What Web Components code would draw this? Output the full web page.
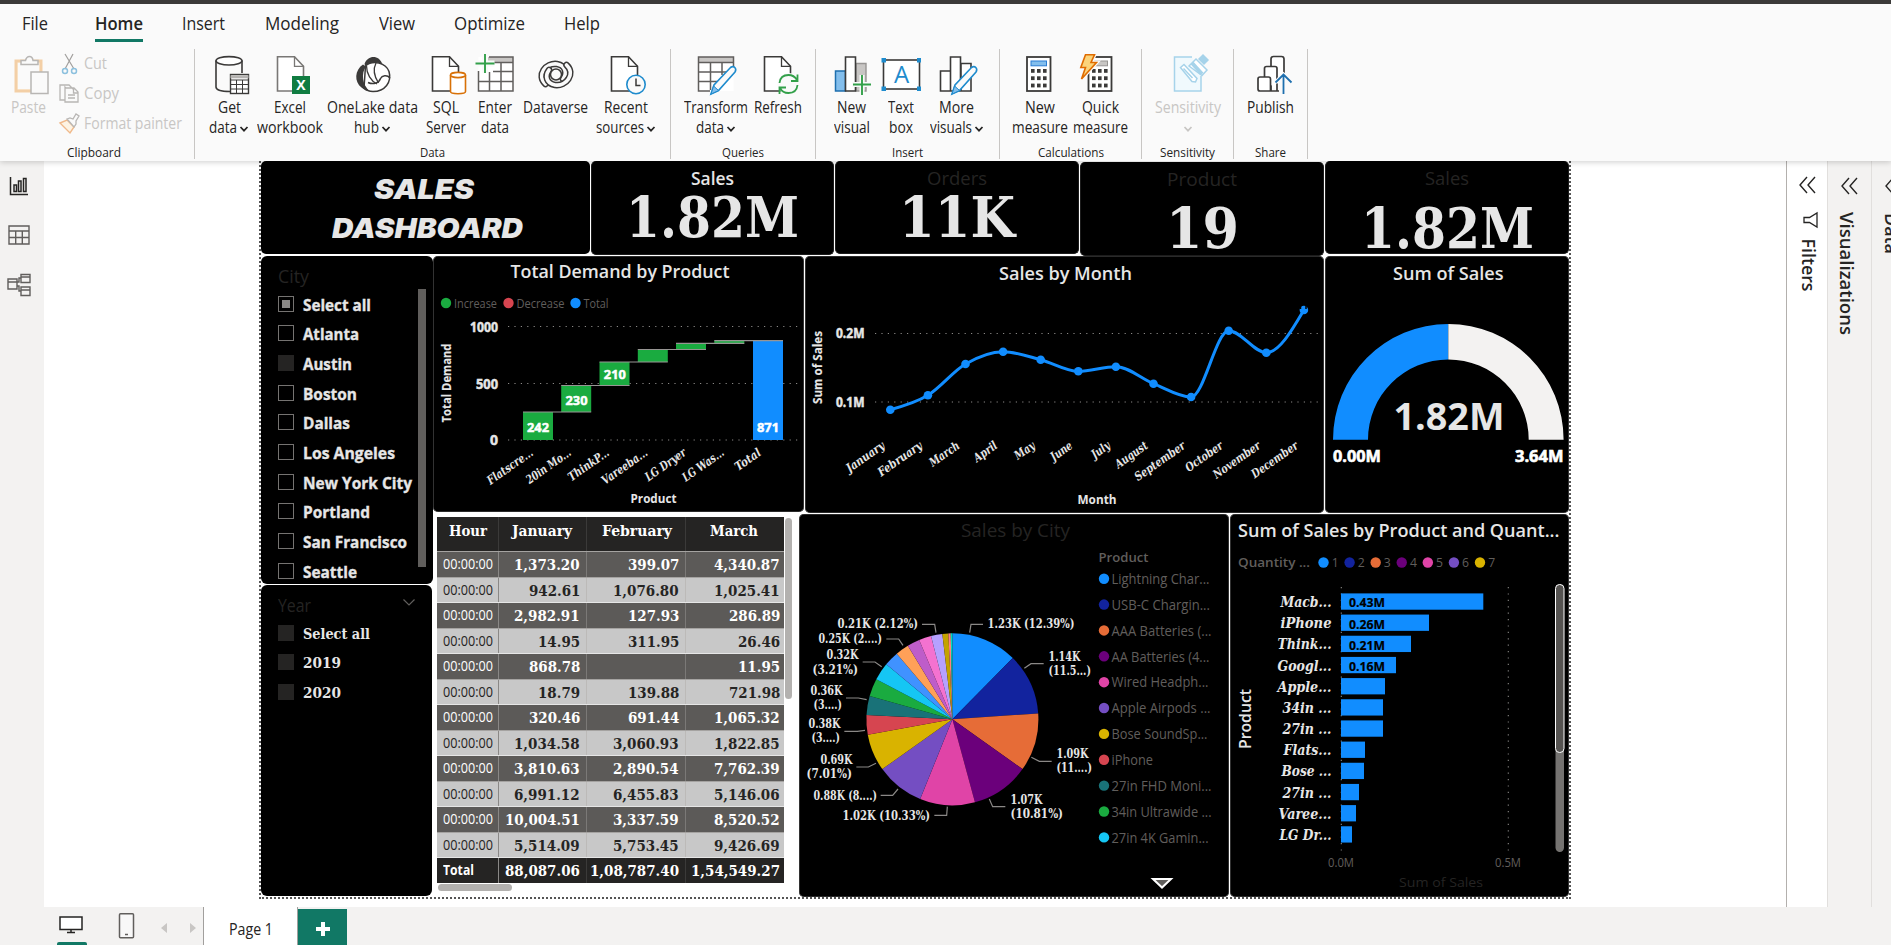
<!DOCTYPE html>
<html lang="en">
<head>
<meta charset="utf-8">
<title>Sales Dashboard</title>
<style>
html,body{margin:0;padding:0}
body{width:1891px;height:945px;overflow:hidden;background:#fff;font-family:"Open Sans","Noto Sans",sans-serif;color:#252423}
</style>
</head>
<body>
<bi-app></bi-app>
<script>
const SANS='"Open Sans","Noto Sans",sans-serif';
const SERIF='"DejaVu Serif","Liberation Serif",serif';

function define(name,css,html){
  customElements.define(name,class extends HTMLElement{
    connectedCallback(){
      if(this.shadowRoot)return;
      this.attachShadow({mode:'open'}).innerHTML='<style>'+css+'</style>'+(typeof html==='function'?html(this):html);
    }
  });
}
// SVG text with an optional exact width
function T(x,y,s,size,o={}){
  const st=`font-family:${(o.serif?SERIF:SANS).replace(/"/g,"'")};font-size:${size}px;font-weight:${o.b||400};${o.i?'font-style:italic;':''}${o.st?`stroke:${o.fill||'#e6e6e6'};stroke-width:${o.st};`:''}`;
  return `<text x="${x}" y="${y}" fill="${o.fill||'#e6e6e6'}" style="${st}" ${o.a?`text-anchor="${o.a}"`:''} ${o.w?`textLength="${o.w}" lengthAdjust="spacingAndGlyphs"`:''} ${o.r?`transform="rotate(${o.r} ${x} ${y})"`:''}>${s}</text>`;
}

// Text squeezed or stretched to a given width
customElements.define('fit-text',class extends HTMLElement{
  connectedCallback(){
    if(this.shadowRoot)return;
    const w=+this.getAttribute('w');
    this.attachShadow({mode:'open'}).innerHTML=`<style>:host{display:inline-block;white-space:nowrap;width:${w}px}span{display:inline-block;transform-origin:0 50%}</style><span><slot></slot></span>`;
    const s=this.shadowRoot.querySelector('span');
    const n=s.getBoundingClientRect().width;
    if(n)s.style.transform=`scaleX(${w/n})`;
  }
});

/* ---------- ribbon ---------- */
const K='#3b3a39';
const doc=(x,c=K)=>`<path d="M${x} 2.8h17l9 9.5V37H${x}z" fill="#fff" stroke="${c}" stroke-width="1.6"/><path d="M${x+17} 2.8v9.6h9" fill="none" stroke="${c}" stroke-width="1.3"/>`;
const pencil=`<path d="M15 40l3-9L34.5 13.5q2.5-1.8 4.3 0t.2 4.5L22.5 36.5z" fill="#fafafa" stroke="#1e8bcd" stroke-width="1.6"/><path d="M15 40l2.6-8 5 4.6z" fill="#83beec" stroke="#1e8bcd"/>`;
const keys=x=>{let r='';for(let j=0;j<3;j++)for(let i=0;i<3;i++)r+=`<rect x="${x+i*6}" y="${15+j*7.3}" width="3.6" height="3.8" fill="${K}"/>`;return r};
const bandA='M9.5 30C0 21 10 8.500 21 10C29.500 11.500 31.500 19 27 25',bandB='M30.500 11C40 20 30 32.500 19 31C10.500 29.500 8.500 22 13 16';
const band=d=>`<path d="${d}" stroke="${K}" stroke-width="6.600"/><path d="${d}" stroke="#fafafa" stroke-width="3.700"/>`;
const ICONS={
 get:`<path d="M7 6.5V33c0 3 6 4.5 14 4.5M33 6.5V19" fill="none" stroke="${K}" stroke-width="1.6"/><ellipse cx="20" cy="6.8" rx="13" ry="4.2" fill="#fff" stroke="${K}" stroke-width="1.6"/><rect x="21.5" y="20.5" width="18" height="19" fill="#fff" stroke="${K}" stroke-width="1.4"/><path d="M21.5 22.8h18" stroke="#b5b3b1" stroke-width="3"/><path d="M21.5 26h18M21.5 30.5h18M21.5 35h18M27.5 26v13M33.5 26v13" stroke="${K}"/>`,
 excel:doc(7.5,'#797775')+`<rect x="22" y="22" width="18" height="18" fill="#107c41"/><text x="31" y="36.2" text-anchor="middle" fill="#fff" style="font:bold 14px 'Open Sans'">X</text>`,
 lake:`<path d="M12.500 12C20 5.500 33 9 36 17.500 39 28 32 37.500 20 37.500 16 37.500 13 36 11 34z" fill="#fff" stroke="${K}" stroke-width="1.500"/><path d="M10 10.500C1.500 16 1 28 8.500 33.500 11 35.800 14 37 17 37.300 9 31 8 19 13 12.500z" fill="${K}"/><path d="M11.500 10C15 .5 26.500 1 29.500 10.500 24 7.500 17 8 12.500 12z" fill="${K}"/><path d="M13.500 12C13.500 20 18 27 24 30M23 9c-3 6-2 13 2.500 20" fill="none" stroke="${K}" stroke-width="1.300"/><path d="M37 24c-3-3.500-8-2.500-9.500.5C26 29 20.500 31 15 28.500" fill="none" stroke="${K}" stroke-width="1.500"/>`,
 sql:doc(6.5)+`<path d="M24.500 21v16.500c0 3 15 3 15 0V21" fill="#fff" stroke="#d87107" stroke-width="1.6"/><ellipse cx="32" cy="21" rx="7.500" ry="2.600" fill="#fff" stroke="#d87107" stroke-width="1.6"/>`,
 enter:`<rect x="3.500" y="3" width="34.500" height="34" fill="#fff"/><path d="M13 3h25v5H13z" fill="#c8c6c4"/><path d="M3.500 17v20H38V3H14M3.500 27.500H38M18 17.500h20M15 8.500h23M14.500 18v19M26 9v28" fill="none" stroke="#605e5c" stroke-width="1.5"/><path d="M10 0v19M.5 9.500h19" stroke="#fafafa" stroke-width="6"/><path d="M10 0v19M.5 9.500h19" stroke="#33a04a" stroke-width="1.9"/>`,
 verse:`<g fill="none" stroke-linecap="round">${band(bandA)}${band(bandB)}<circle cx="20" cy="20.500" r="5.500" fill="#fafafa" stroke="${K}" stroke-width="1.500"/></g>`,
 recent:doc(5.500)+`<circle cx="30" cy="30.500" r="9.200" fill="#fafafa" stroke="#1e8bcd" stroke-width="1.600"/><path d="M30 24.500v7h4.500" fill="none" stroke="${K}" stroke-width="1.5"/>`,
 transform:`<rect x="2.500" y="3" width="35" height="34" fill="#fff"/><path d="M2.500 3h35v5.500h-35z" fill="#c8c6c4"/><path d="M37.500 14V3h-35v34H14M2.500 8.500h35M2.500 18H30M2.500 27.500H21M14.500 9v27M26 9v12" fill="none" stroke="#605e5c" stroke-width="1.500"/>`+pencil,
 refresh:doc(6.500)+`<circle cx="30.500" cy="30" r="11" fill="#fafafa"/><path d="M21.500 29c.5-5 4-8 9-8 4 0 7 2.500 8.500 5M39.500 20.500V27H33M39.500 31c-.5 5-4 8-9 8-4 0-7-2-8.500-5M21.500 40v-6.500H28" fill="none" stroke="#33a04a" stroke-width="1.800"/>`,
 visual:`<path d="M24 9.500h10V37H24z" fill="#c8c6c4" stroke="#979593" stroke-width="1.400"/><path d="M3.500 17h10v20h-10z" fill="#83beec" stroke="#1e6fae" stroke-width="1.500"/><path d="M13.500 3h10v34h-10z" fill="#fff" stroke="${K}" stroke-width="1.600"/><path d="M30 21v20M20 30.500h19" stroke="#fafafa" stroke-width="5"/><path d="M30 21v20M21 30.500h18" stroke="#33a04a" stroke-width="1.900"/>`,
 text:`<rect x="2.500" y="6" width="36" height="29" fill="#fff" stroke="${K}" stroke-width="1.600"/><path d="M.5 4h4.500v4.500H.5zM36 4h4v4.500h-4zM.5 32.500h4.500V37H.5zM36 32.500h4V37h-4z" fill="#1e8bcd"/><text x="20.500" y="29" text-anchor="middle" fill="#1e8bcd" style="font:24px 'Open Sans'">A</text>`,
 more:`<path d="M3.500 17h10v20h-10zM24 9.500h10V37H24zM13.500 3h10v34h-10z" fill="#fff" stroke="${K}" stroke-width="1.600"/>`+pencil,
 measure:`<rect x="7" y="3" width="23.500" height="34" fill="#fff" stroke="${K}" stroke-width="1.800"/><rect x="11" y="7" width="15.500" height="4.800" fill="#83beec" stroke="#2b7cd3"/>`+keys(11),
 quick:`<rect x="8.500" y="3" width="23" height="34" fill="#fff" stroke="${K}" stroke-width="1.800"/><rect x="14" y="7" width="13.500" height="4.800" fill="#c8c6c4" stroke="#979593"/>`+keys(12)+`<path d="M5.500.8h9L11 8.500h5.500L1.500 25l4-11.500H.8z" fill="#fbd47b" stroke="#fafafa" stroke-width="4"/><path d="M5.500.8h9L11 8.500h5.500L1.500 25l4-11.500H.8z" fill="#fbd47b" stroke="#e06c00" stroke-width="1.600"/>`,
 sens:`<g fill="none" stroke="#a6d3ea" stroke-width="1.500"><path d="M33 22v15H6.500V3H24" fill="#f0f9fd"/><path d="M12.500 13.500l3.500-3 13 14-1.500 3.500-3.500-.5z" fill="#fff"/><path d="M15.500 14.500l9 9.500"/><path d="M21 12l7-7 11 11-5 5.500z" fill="#fff"/><path d="M24 9l10 11" stroke-width="4"/><path d="M31 5l4-4 5 5-4 4z" fill="#a6d3ea"/></g>`,
 publish:`<g fill="#fff" stroke="${K}" stroke-width="1.700"><path d="M20 37V5q0-2.500 2.500-2.500h8Q33 2.500 33 5v14"/><path d="M13.500 24V14.500q0-2 2-2H24q2 0 2 2V37"/><path d="M7 35V25q0-2 2-2h8.500q2 0 2 2v12H9q-2 0-2-2zM19.500 37H28"/></g><path d="M32.500 20v20M24.500 28.500l8-8 8 8" fill="none" stroke="#fafafa" stroke-width="4"/><path d="M32.500 20.500V40M24.500 28.500l8-8 8 8" fill="none" stroke="#1e6fae" stroke-width="1.800"/>`
};
const chev=`<svg width="10" height="8" viewBox="0 0 10 8"><path d="M1.500 2l3.500 3.700L8.500 2" fill="none" stroke="currentColor" stroke-width="1.700"/></svg>`;
define('ribbon-button',`:host{display:flex;flex-direction:column;align-items:center;padding-top:5px;box-sizing:border-box;font-size:15.5px;line-height:20px}
:host([disabled]){color:#c8c6c4}
.i{display:block;margin-bottom:1px;overflow:visible}.l{height:20px;display:flex;align-items:center;gap:2px}.l svg{margin-top:3px}`,
 el=>{
  el.style.width=el.getAttribute('width')+'px';
  const line=(s)=>{if(!s)return'';const[t,w,c]=s.split('|');return `<div class="l">${t?`<fit-text w="${w}">${t}</fit-text>`:''}${c?chev:''}</div>`};
  return `<svg class="i" width="40" height="42" viewBox="0 0 40 42">${ICONS[el.getAttribute('icon')]}</svg>${line(el.getAttribute('l1'))}${line(el.getAttribute('l2'))}`;
 });
define('ribbon-group',`:host{display:flex;flex-direction:column;box-sizing:border-box;height:110px;border-right:1px solid #c8c6c4}
.b{display:flex;justify-content:center;height:95px;padding-right:var(--shift,0)}.n{font-size:13px;line-height:16px;text-align:center;height:15px;padding-right:var(--lshift,0)}`,
 el=>{el.style.width=el.getAttribute('width')+'px';return `<div class="b"><slot></slot></div><div class="n"><fit-text w="${el.getAttribute('lw')}">${el.getAttribute('label')}</fit-text></div>`});
define('clipboard-tools',`:host{display:flex;width:194px;color:#c8c6c4;font-size:15.5px}
.p{display:flex;flex-direction:column;align-items:flex-start;padding:5px 0 0 11px;width:46px;box-sizing:content-box;line-height:20px}
.p svg{margin:0 0 1px 2px}.s{display:flex;flex-direction:column;margin-top:-1px}.r{display:flex;height:30px;align-items:center;gap:3px}`,
 `<div class="p"><svg width="36" height="42" viewBox="0 0 36 42"><rect x="3" y="7" width="25" height="30" fill="#fdf3e3" stroke="#f3cfa6" stroke-width="3"/><path d="M5 9h21v26H5z" fill="#fafafa"/><path d="M8 10.500V6.500h4.500q1-4 4-4t3.500 4H25v4z" fill="#fafafa" stroke="#b8b6b4" stroke-width="1.500"/><rect x="18" y="18" width="17" height="21.500" fill="#fafafa" stroke="#b8b6b4" stroke-width="1.500"/></svg><fit-text w="35">Paste</fit-text></div>
 <div class="s">
 <div class="r"><svg width="24" height="24" viewBox="0 0 24 24"><path d="M8 3l9 15M16 3L8 18" stroke="#a19f9d" stroke-width="1.200"/><circle cx="8" cy="20" r="2.500" fill="none" stroke="#8cc0de" stroke-width="1.500"/><circle cx="17" cy="20" r="2.500" fill="none" stroke="#8cc0de" stroke-width="1.500"/></svg><fit-text w="23">Cut</fit-text></div>
 <div class="r"><svg width="24" height="24" viewBox="0 0 24 24"><path d="M8 19H3V4h9l4 4M8 6v15h13V11l-4-4H9z M16.500 7v5H21M11 14h7M11 17h7" fill="none" stroke="#b8b6b4" stroke-width="1.300"/></svg><fit-text w="35">Copy</fit-text></div>
 <div class="r"><svg width="24" height="24" viewBox="0 0 24 24"><path d="M3 12l7-3 7 7-4 6z" fill="#fdf3e3" stroke="#f0b98a" stroke-width="1.400"/><path d="M10 8l3-1 3 1 3-5 3 2-3 5v3l-2 3z" fill="#fafafa" stroke="#b8b6b4" stroke-width="1.300"/></svg><fit-text w="98">Format painter</fit-text></div>
 </div>`);
define('ribbon-tab',`:host{display:block;height:38px;box-sizing:border-box;font-size:17.5px;line-height:38px;border-bottom:3px solid transparent;color:#252423}
:host([active]){font-weight:600;border-bottom-color:#117865}fit-text{display:block}`,
 el=>`<fit-text w="${el.getAttribute('w')}">${el.getAttribute('label')}</fit-text>`);
define('app-ribbon',`:host{display:block;height:161px;box-sizing:border-box;border-top:4px solid #3b3a39;background:#fafafa;box-shadow:0 1px 6px #0003;position:relative;z-index:2}
nav{display:flex;height:45px}.g{display:flex}`,
 ()=>{
  const tabs=[['File',22,48],['Home',95,143],['Insert',182,225],['Modeling',265,339],['View',379,415],['Optimize',454,525],['Help',564,600]];
  let x=0,n='';
  for(const[t,a,b]of tabs){n+=`<ribbon-tab label="${t}" w="${b-a}" style="margin:0 0 0 ${a-x}px" ${t==='Home'?'active':''}></ribbon-tab>`;x=b}
  const B=(icon,width,l1,l2='',d='')=>`<ribbon-button icon="${icon}" width="${width}" l1="${l1}" l2="${l2}" ${d}></ribbon-button>`;
  return `<nav>${n}</nav><div class="g">
  <ribbon-group width="195" label="Clipboard" lw="54" style="--lshift:7px"><clipboard-tools></clipboard-tools></ribbon-group>
  <ribbon-group width="476" label="Data" lw="25" style="--shift:2px">${B('get',51,'Get|23','data|28|1')}${B('excel',70,'Excel|32','workbook|66')}${B('lake',96,'OneLake data|91','hub|25|1')}${B('sql',50,'SQL|26','Server|40')}${B('enter',49,'Enter|34','data|28')}${B('verse',72,'Dataverse|65')}${B('recent',68,'Recent|44','sources|48|1')}</ribbon-group>
  <ribbon-group width="145" label="Queries" lw="42">${B('transform',70,'Transform|64','data|28|1')}${B('refresh',54,'Refresh|48')}</ribbon-group>
  <ribbon-group width="184" label="Insert" lw="31">${B('visual',48,'New|29','visual|36')}${B('text',50,'Text|26','box|24')}${B('more',62,'More|35','visuals|42|1')}</ribbon-group>
  <ribbon-group width="142" label="Calculations" lw="66" style="--shift:2px">${B('measure',61,'New|30','measure|56')}${B('quick',59,'Quick|37','measure|55')}</ribbon-group>
  <ribbon-group width="92" label="Sensitivity" lw="55">${B('sens',72,'Sensitivity|66','||1','disabled')}</ribbon-group>
  <ribbon-group width="74" label="Share" lw="31">${B('publish',52,'Publish|47')}</ribbon-group></div>`;
 });

/* ---------- visuals ---------- */
define('kpi-card',`:host{display:flex;flex-direction:column;align-items:center;box-sizing:border-box;background:#000;color:#e6e6e6;border:1px solid #1c1c1c;border-top:0;border-radius:5px}
.n{font-size:17.5px;line-height:24px;font-weight:var(--w,400);color:var(--c,#252423);margin-top:5px}
.v{font:bold 56px/60px ${SERIF};margin-top:var(--m,-3px)}`,
 el=>`<fit-text class="n" w="${el.getAttribute('nw')}">${el.getAttribute('name')}</fit-text><fit-text class="v" w="${el.getAttribute('vw')}">${el.getAttribute('value')}</fit-text>`);
define('title-card',`:host{display:flex;flex-direction:column;align-items:center;box-sizing:border-box;background:#000;color:#e6e6e6;border-radius:5px;font:italic 900 27.5px/39px Inter,"Liberation Sans",sans-serif;padding-top:8.500px}
.a{margin-right:3px}.b{margin-left:5px}`,
 `<fit-text class="a" w="100">SALES</fit-text><fit-text class="b" w="191">DASHBOARD</fit-text>`);

define('slicer-item',`:host{display:flex;align-items:center;gap:9px;height:29.65px;font-size:16.800px;font-weight:700;color:#e6e6e6}
fit-text{-webkit-text-stroke:.35px #e6e6e6;margin-top:1px}
:host([serif]) fit-text{-webkit-text-stroke:0}
.c{width:16px;height:16px;box-sizing:border-box;border:1px solid #757371;display:grid;place-items:center}
:host([filled]) .c{background:#252423;border-color:#252423}
:host([partial]) .c::after{content:"";width:8px;height:8px;background:#8a8886}
:host([serif]){font:bold 14.5px ${SERIF}}`,
 el=>`<div class="c"></div><fit-text w="${el.getAttribute('w')}">${el.getAttribute('label')}</fit-text>`);
define('slicer-card',`:host{display:block;box-sizing:border-box;background:#000;border-radius:6px;overflow:hidden}
header{display:flex;justify-content:space-between;font-size:18.500px;color:#252423;line-height:24px;height:33px;padding:8px 16px 0 17px;box-sizing:border-box}
.b{display:flex;justify-content:space-between;padding:0 7px 0 16.500px}.s{width:8px;height:278px;background:#605e5c;flex:none}`,
 el=>`<header><fit-text w="${el.getAttribute('w')}">${el.getAttribute('label')}</fit-text>${el.hasAttribute('chevron')?'<svg width="14" height="9" viewBox="0 0 14 9" style="margin-top:5px"><path d="M1.500 1.500L7 7l5.500-5.500" fill="none" stroke="#605e5c" stroke-width="1.200"/></svg>':''}</header><div class="b"><div><slot></slot></div>${el.hasAttribute('scroll')?'<div class="s"></div>':''}</div>`);

const chartCss=`:host{display:block;box-sizing:border-box;background:#000;border-radius:5px;overflow:hidden;box-shadow:0 0 0 .6px #555 inset}svg{display:block}`;
const chart=(name,box,draw)=>define(name,chartCss,()=>`<svg width="${box[2]}" height="${box[3]}" viewBox="${box.join(' ')}">${draw()}</svg>`);
const dots=(x1,y1,x2,y2)=>`<line x1="${x1}" y1="${y1}" x2="${x2}" y2="${y2}" stroke="#8a8886" stroke-width="1.100" stroke-dasharray="1.200 5.200"/>`;

chart('waterfall-chart',[433,256,371,256],()=>{
  let s=T(510.5,277.7,'Total Demand by Product',18,{b:600,w:219});
  for(const[c,x,t,w]of[['#1aab40',446,'Increase',43],['#d64550',508.5,'Decrease',48],['#118dff',575.5,'Total',25]])
    s+=`<circle cx="${x}" cy="303" r="5.200" fill="${c}"/>`+T(x+8,307.7,t,13,{fill:'#605e5c',w});
  for(const[t,x,y,w]of[['1000',470,326.5,28],['500',476,383.5,22],['0',490,440,8]])
    s+=dots(508,y,800,y)+T(x,y+5,t,13.5,{b:700,w,st:.5});
  s+=T(450.5,422.5,'Total Demand',12.500,{b:700,w:79,r:-90,st:.1});
  const bars=[[523,412,440],[561.2,385.5,412],[599.5,362,385.5],[637.8,349.5,362],[676,343.3,349.5],[714.3,340.6,343.5],[753,340.6,440]];
  bars.forEach(([x,a,b],i)=>s+=`<rect x="${x}" y="${a}" width="30" height="${b-a}" fill="${i===6?'#118dff':'#1aab40'}"/>`);
  bars.slice(0,6).forEach(([x,a],i)=>s+=`<line x1="${x}" x2="${bars[i+1][0]+30}" y1="${a}" y2="${a}" stroke="#979593" stroke-width="1.200"/>`);
  for(const[t,x,y]of[['242',527,431.5],['230',565.5,404.5],['210',603.8,378.5],['871',757,431.5]])s+=T(x,y,t,12.8,{b:700,w:22,fill:'#fff',st:.5});
  [['Flatscre...',534,53],['20in Mo...',572,52],['ThinkP...',610,47],['Vareeba...',648.5,53],['LG Dryer',687,47],['LG Was...',725,48],['Total',762,29]]
   .forEach(([t,x,w])=>s+=T(x,454.5,t,12,{b:700,i:1,serif:1,a:'end',w,r:-35}));
  return s+T(630.5,503,'Product',12.5,{b:700,w:46});
});

chart('line-chart',[805,256,519,257],()=>{
  let s=T(999,280,'Sales by Month',18,{b:600,w:133});
  s+=dots(875,333.5,1319,333.5)+dots(875,402,1319,402);
  s+=T(836,338,'0.2M',13.4,{b:700,w:28.5,st:.5})+T(836,406.5,'0.1M',13.4,{b:700,w:28.5,st:.5});
  s+=T(822,404,'Sum of Sales',12,{b:700,w:73,r:-90,st:.1});
  const ys=[409.7,395.3,364,351.7,359.7,371.3,366.7,383.7,397,330.7,352.7,310],h=37.6,xs=ys.map((_,i)=>890.3+i*h);
  const d=ys.slice(1).map((y,i)=>(y-ys[i])/h),n=ys.length,m=[];
  for(let i=1;i<n-1;i++){const p=(d[i-1]+d[i])/2;m[i]=d[i-1]*d[i]<=0?0:Math.sign(d[i])*2*Math.min(Math.abs(d[i-1]),Math.abs(d[i]),.5*Math.abs(p))}
  m[0]=(3*d[0]-m[1])/2;m[n-1]=(3*d[n-2]-m[n-2])/2;
  let p=`M${xs[0]} ${ys[0]}`;
  for(let i=1;i<n;i++)p+=`C${xs[i-1]+h/3} ${ys[i-1]+m[i-1]*h/3} ${xs[i]-h/3} ${ys[i]-m[i]*h/3} ${xs[i]} ${ys[i]}`;
  s+=`<path d="${p}" fill="none" stroke="#118dff" stroke-width="3"/>`;
  xs.forEach((x,i)=>s+=`<circle cx="${x}" cy="${ys[i]}" r="4.300" fill="#118dff"/>`);
  s+='<path d="M1300.500 305v4M1306 305v4" stroke="#000" stroke-width="1.500"/>';
  [['January',44],['February',51],['March',34],['April',26],['May',22],['June',24],['July',20],['August',37],['September',59],['October',43],['November',55],['December',54]]
   .forEach(([t,w],i)=>s+=T(885.5+i*h,447.5,t,12,{b:700,i:1,serif:1,a:'end',w,r:-35}));
  return s+T(1077.5,504,'Month',12.5,{b:700,w:39});
});

chart('gauge-chart',[1325,256,244,257],()=>
  T(1393,279.7,'Sum of Sales',17.5,{b:600,w:110.5})
  +`<path d="M1333 439.700A115.500 115.500 0 0 1 1448.300 324V359.500A80.200 80.200 0 0 0 1368 439.700z" fill="#118dff"/><path d="M1448.300 324A115.500 115.500 0 0 1 1563.600 439.700H1528.700A80.200 80.200 0 0 0 1448.300 359.500z" fill="#f3f2f1"/>`
  +T(1393.5,429.7,'1.82M',38,{b:700,w:111})+T(1333,461.5,'0.00M',15.5,{b:700,w:48,fill:'#fff',st:.6})+T(1515,461.5,'3.64M',15.5,{b:700,w:48.5,fill:'#fff',st:.6})
);

const COL=['#118dff','#12239e','#e66c37','#6b007b','#e044a7','#744ec2','#d9b300','#d64550','#197278','#1aab40','#15c6f4','#4092ff','#ffa058','#be5dc9','#f472d0','#b5a1ff','#c4a200','#ff8080','#00dbbc'];
chart('pie-chart',[799,514,430,383],()=>{
  let s=T(961,536.7,'Sales by City',18,{fill:'#252423',w:109});
  const A=[0,44.6,86.1,125.4,164.8,202,234.6,259.7,272.9,285.8,297.8,309.7,319.7,328.8,337.3,345.6,353.3,357.3,358.9,360],cx=952.4,cy=719.3,r=86;
  const P=a=>`${cx+r*Math.sin(a*Math.PI/180)} ${cy-r*Math.cos(a*Math.PI/180)}`;
  COL.forEach((c,i)=>s+=`<path d="M${cx} ${cy}L${P(A[i])}A${r} ${r} 0 0 1 ${P(A[i+1])}z" fill="${c}"/>`);
  for(const l of[[524,368,528,343,564,343],[688,475,708,461,746,461],[709,742,733,754,770,754],[583,867,593,890,631,890],[457,890,455,916,418,916],[309,837,293,856,257,856],[243,760,220,771,184,771],[210,661,187,664,148,664],[215,569,190,564,153,564],[260,470,240,456,203,456],[324,406,311,387,274,387],[423,368,419,343,381,343]]){
    const q=l.map((v,i)=>(i%2?510:795)+v/3);s+=`<path d="M${q[0]} ${q[1]}L${q[2]} ${q[3]}L${q[4]} ${q[5]}" fill="none" stroke="#8a8886" stroke-width="1.200"/>`}
  for(const[t,x,x2,y]of[['1.23K (12.39%)',987.5,1074.5,628.3],['1.14K',1048.5,1080.5,661.3],['(11.5...)',1048.5,1091,675.3],['1.09K',1056.5,1088.5,758.3],['(11....)',1056.5,1092,772.3],['1.07K',1010.5,1042.5,804.3],['(10.81%)',1010.5,1063,817.5],['1.02K (10.33%)',842.5,930,819.5],['0.88K (8....)',813.5,877,799.5],['0.69K',820.5,852.5,764.3],['(7.01%)',806.5,852,778.3],['0.38K',808.5,840.5,728.3],['(3....)',811.5,840,742.3],['0.36K',810.5,842.5,695.3],['(3....)',813.5,842,709.3],['0.32K',826.5,858.5,659.3],['(3.21%)',812.5,858,673.5],['0.25K (2....)',818.5,882,643],['0.21K (2.12%)',837.5,918,628.3]])
    s+=T(x,y,t,12,{serif:1,b:700,w:x2-x});
  s+=T(1098.5,562.3,'Product',13.300,{b:600,fill:'#605e5c',w:50});
  [['Lightning Char...',98],['USB-C Chargin...',98.5],['AAA Batteries (...',100],['AA Batteries (4...',98],['Wired Headph...',97],['Apple Airpods ...',99],['Bose SoundSp...',96],['iPhone',41.5],['27in FHD Moni...',100],['34in Ultrawide ...',100],['27in 4K Gamin...',97]]
   .forEach(([t,w],i)=>{const y=578.7+i*25.87;s+=`<circle cx="1104" cy="${y}" r="5.200" fill="${COL[i]}"/>`+T(1111.5,y+5.3,t,13.700,{fill:'#605e5c',w})});
  return s+'<path d="M1153 879h18l-9 8.500z" fill="#605e5c" stroke="#fff" stroke-width="2"/>';
});

chart('bar-chart',[1230,514,339,383],()=>{
  let s=T(1238,536.7,'Sum of Sales by Product and Quant...',18,{b:600,w:321.5});
  s+=T(1238,567.3,'Quantity ...',13.300,{b:600,fill:'#605e5c',w:72});
  for(let i=0;i<7;i++)s+=`<circle cx="${1323.5+i*26.08}" cy="562.500" r="5.200" fill="${COL[i]}"/>`+T(1331.7+i*26.08,567.3,i+1,13.5,{fill:'#605e5c',w:7});
  s+=dots(1341.3,587,1341.3,853)+dots(1508.3,587,1508.3,853);
  [['Macb...',51,142.3,'0.43M'],['iPhone',51,88,'0.26M'],['Think...',54,70,'0.21M'],['Googl...',54,55,'0.16M'],['Apple...',54,44],['34in ...',49,42],['27in ...',49,42],['Flats...',48,24],['Bose ...',50,23],['27in ...',49,18],['Varee...',53,15],['LG Dr...',52,11]]
   .forEach(([t,w,l,v],i)=>{const y=593.4+i*21.17;s+=`<rect x="1341" y="${y}" width="${l}" height="16.300" fill="#118dff"/>`+T(1331.500,y+13.6,t,14.500,{serif:1,b:700,i:1,a:'end',w});if(v)s+=T(1349,y+14,v,12.800,{b:700,fill:'#000',w:36,st:.2})});
  s+=T(1328,867,'0.0M',12.500,{fill:'#605e5c',w:26})+T(1495,867,'0.5M',12.500,{fill:'#605e5c',w:26})+T(1399,887,'Sum of Sales',13.500,{fill:'#252423',w:84});
  s+=T(1251,749,'Product',15.500,{b:600,w:60,r:-90});
  return s+'<rect x="1555.500" y="584.500" width="8.500" height="267.500" rx="4.200" fill="#757371"/><rect x="1555.500" y="584.500" width="8.500" height="168" rx="4" fill="#555351" stroke="#fff"/>';
});

define('data-matrix',`:host{display:block;background:#fff;padding:3px 5px 0 4px;box-sizing:border-box}
.m{display:flex}.t{width:347px}
.r{display:grid;grid-template-columns:61.500px 88px 99px 98.500px;height:25.540px;box-sizing:border-box;background:#5c5a58;color:#fff;border-bottom:1px solid #a5a3a1;font:bold 14.500px/25px ${SERIF}}
.r>*{box-sizing:border-box;border-right:1px solid #7b7977;text-align:right;padding-right:5.500px;overflow:hidden}
.r>:last-child{border:0;padding-right:4px}
.r>:first-child{font:14.500px/23px ${SANS};text-align:left;padding-left:5.500px;border-color:#8a8886}
.e{background:#c8c8c8;color:#252423;border-bottom-color:#e6e6e6}.e>*{border-color:#bcbab8}
.h{background:#252423;height:35px;line-height:27px}.h>*,.h>:first-child{font:bold 14.500px/27px ${SERIF};text-align:center;padding:0 0 0 2px;border-color:#3b3a39}
.f{background:#252423;height:24.500px;border:0}.f>*{border-color:#3b3a39}.f>:first-child{font-weight:700;font-size:14px}
.v{width:7px;height:181px;border-radius:4px;background:#b3b1af;margin:1px 0 0 1px}
.z{width:74px;height:7px;border-radius:4px;background:#b3b1af;margin:1px 0 0 1px}`,
 ()=>{
  const num=t=>t?`<fit-text w="${(t.replace(/\D/g,'').length*9.33+t.replace(/\d/g,'').length*4.8).toFixed(1)}">${t}</fit-text>`:'';
  const D=`1,373.20 399.07 4,340.87
942.61 1,076.80 1,025.41
2,982.91 127.93 286.89
14.95 311.95 26.46
868.78 - 11.95
18.79 139.88 721.98
320.46 691.44 1,065.32
1,034.58 3,060.93 1,822.85
3,810.63 2,890.54 7,762.39
6,991.12 6,455.83 5,146.06
10,004.51 3,337.59 8,520.52
5,514.09 5,753.45 9,426.69`.split('\n').map(l=>l.split(' '));
  const row=(c,f,w,v)=>`<div class="r ${c}"><div><fit-text w="${w}">${f}</fit-text></div>${v.map(x=>`<div>${x==='-'?'':num(x)}</div>`).join('')}</div>`;
  return `<div class="m"><div class="t"><div class="r h"><div><fit-text w="38">Hour</fit-text></div><div style="padding-right:2px"><fit-text w="60">January</fit-text></div><div><fit-text w="70">February</fit-text></div><div><fit-text w="48">March</fit-text></div></div>
  ${D.map((v,i)=>row(i%2?'e':'','00:00:00',50,v)).join('')}${row('f','Total',31,['88,087.06','1,08,787.40','1,54,549.27'])}</div><div class="v"></div></div><div class="z"></div>`;
 });

define('report-page',`:host{display:flex;flex-direction:column;width:1308px;height:736px;border:2px dotted #555;border-top:0;box-sizing:content-box;background:#fff}
.top{display:flex;height:94px;gap:1px;align-items:flex-start;margin-bottom:1px}
.main{display:flex}.left{display:flex;flex-direction:column;gap:1px;width:172px}
.r2,.r3{display:flex}.r2{gap:1px;height:257px;margin-bottom:1px}.r3{height:383px}`,
 `<div class="top">
 <title-card style="width:328.500px;height:92.500px"></title-card>
 <kpi-card style="width:243.500px;height:94px;--w:600;--c:#e6e6e6" name="Sales" nw="43" value="1.82M" vw="173"></kpi-card>
 <kpi-card style="width:244px;height:93px" name="Orders" nw="60" value="11K" vw="116"></kpi-card>
 <kpi-card style="width:244px;height:94px;margin-top:1px;--m:7px" name="Product" nw="70" value="19" vw="73"></kpi-card>
 <kpi-card style="width:244px;height:93px;--m:8px" name="Sales" nw="44" value="1.82M" vw="173"></kpi-card></div>
 <div class="main"><div class="left">
 <slicer-card label="City" w="31" scroll style="height:328px"><slicer-item label="Select all" w="68" partial></slicer-item><slicer-item label="Atlanta" w="56"></slicer-item><slicer-item label="Austin" w="49" filled></slicer-item><slicer-item label="Boston" w="54"></slicer-item><slicer-item label="Dallas" w="47"></slicer-item><slicer-item label="Los Angeles" w="92"></slicer-item><slicer-item label="New York City" w="109"></slicer-item><slicer-item label="Portland" w="67"></slicer-item><slicer-item label="San Francisco" w="104"></slicer-item><slicer-item label="Seattle" w="54"></slicer-item></slicer-card>
 <slicer-card label="Year" w="33" chevron style="height:311px;width:171px"><slicer-item serif filled label="Select all" w="67"></slicer-item><slicer-item serif filled label="2019" w="38"></slicer-item><slicer-item serif filled label="2020" w="38"></slicer-item></slicer-card></div>
 <div><div class="r2"><waterfall-chart style="height:256px"></waterfall-chart><line-chart></line-chart><gauge-chart></gauge-chart></div>
 <div class="r3"><data-matrix style="width:366px"></data-matrix><pie-chart style="margin-right:1px"></pie-chart><bar-chart></bar-chart></div></div></div>`);

/* ---------- shell ---------- */
define('view-rail',`:host{display:flex;flex-direction:column;align-items:center;width:44px;background:#f3f2f1;padding-top:14px;box-sizing:border-box;gap:27px}svg{margin-right:6px}`,
 `<svg width="22" height="22" viewBox="0 0 22 22"><path d="M2.500 2v17.500H20" fill="none" stroke="#252423" stroke-width="1.500"/><path d="M6 10h2.500v6.500H6zM10.500 6H13v10.500h-2.500zM15.500 3.500H18v13h-2.500z" fill="none" stroke="#252423" stroke-width="1.500"/></svg>
 <svg width="22" height="22" viewBox="0 0 22 22"><path d="M1 2h20v18H1zM1 7h20M1 13.500h20M7.700 7v13M14.300 7v13" fill="none" stroke="#605e5c" stroke-width="1.400"/></svg>
 <svg width="24" height="24" viewBox="0 0 24 24"><path d="M1 6h9v10H1zM1 9h9M14 1.500h9v8h-9zM14 4h9M14 14h9v8.500h-9zM14 17h9M10 9h2V5h2M10 13h2v5h2" fill="none" stroke="#605e5c" stroke-width="1.400"/></svg>`);
define('side-panes',`:host{display:flex;width:105px;overflow:hidden}
div{box-sizing:border-box;border-left:1px solid #e1dfdd;background:#f3f2f1;flex:none}
.a{width:41px;background:#fff;border-color:#b3b0ad}.b,.c{width:44px}svg{display:block;overflow:visible}`,
 ()=>{
  const ch=(x,y)=>`<path d="M${x+7} ${y}l-7 8 7 8M${x+15} ${y}l-7 8 7 8" fill="none" stroke="#252423" stroke-width="1.400"/>`;
  const o={b:600,fill:'#252423',r:90};
  return `<div class="a"><svg width="40" height="300">${ch(13,16)}<path d="M30 52v14L22.500 61.500H17v-5h5.500z" fill="none" stroke="#252423" stroke-width="1.300"/>${T(14.5,77.5,'Filters',17.5,{...o,w:53})}</svg></div>
  <div class="b"><svg width="43" height="300">${ch(14,17)}${T(12,51,'Visualizations',17.5,{...o,w:123})}</svg></div>
  <div class="c"><svg width="43" height="300">${ch(14,17)}${T(13,52,'Data',17.5,{...o,w:41})}</svg></div>`;
 });
define('page-footer',`:host{display:flex;height:38px;background:#f3f2f1;padding-left:44px}
.d{display:flex;flex-direction:column;align-items:center;justify-content:space-between;width:30px;margin-left:13px}.u{width:30px;height:3px;background:#117865;border-radius:2px 2px 0 0}
.d svg{margin:8px 2px 0 0}.p{margin:5px 0 0 31px}.ar{margin:15px 0 0 26px}.t{display:flex;align-items:center;justify-content:center;box-sizing:border-box;width:95px;margin-left:7px;background:#fff;border:1px solid #a19f9d;border-width:0 1px;font-size:16.500px;line-height:24px;height:38px;padding:5px 0 0 1px}
.g{width:49px;height:36px;margin-top:2px;background:#117865;display:grid;place-items:center}`,
 `<div class="d"><svg width="26" height="20" viewBox="0 0 26 20"><path d="M2 2h22v12.500H2z" fill="#fff" stroke="#252423" stroke-width="1.500"/><path d="M13 14.500V17M9 17.500h8" stroke="#252423" stroke-width="1.500"/></svg><div class="u"></div></div>
 <svg class="p" width="17" height="28" viewBox="0 0 17 28"><rect x="1.500" y="1.700" width="14" height="24" rx="1" fill="#f8f8f8" stroke="#605e5c" stroke-width="1.500"/><path d="M7 22.500h3" stroke="#605e5c" stroke-width="1.500"/></svg>
 <svg class="ar" width="35" height="12" viewBox="0 0 35 12"><path d="M6 1v10L0 6zM29 1v10l6-5z" fill="#c8c6c4"/></svg>
 <div class="t"><fit-text w="44">Page 1</fit-text></div>
 <div class="g"><svg width="16" height="16" viewBox="0 0 16 16" style="margin-top:4px"><path d="M8 1v14M1 8h14" stroke="#fff" stroke-width="4"/></svg></div>`);
define('bi-app',`:host{display:flex;flex-direction:column;width:1891px;height:945px;overflow:hidden}
.mid{display:flex;height:746px}.cv{flex:1;background:#fff;padding-left:215px;overflow:hidden}`,
 `<app-ribbon></app-ribbon><div class="mid"><view-rail></view-rail><div class="cv"><report-page></report-page></div><side-panes></side-panes></div><page-footer></page-footer>`);
</script>
</body>
</html>
